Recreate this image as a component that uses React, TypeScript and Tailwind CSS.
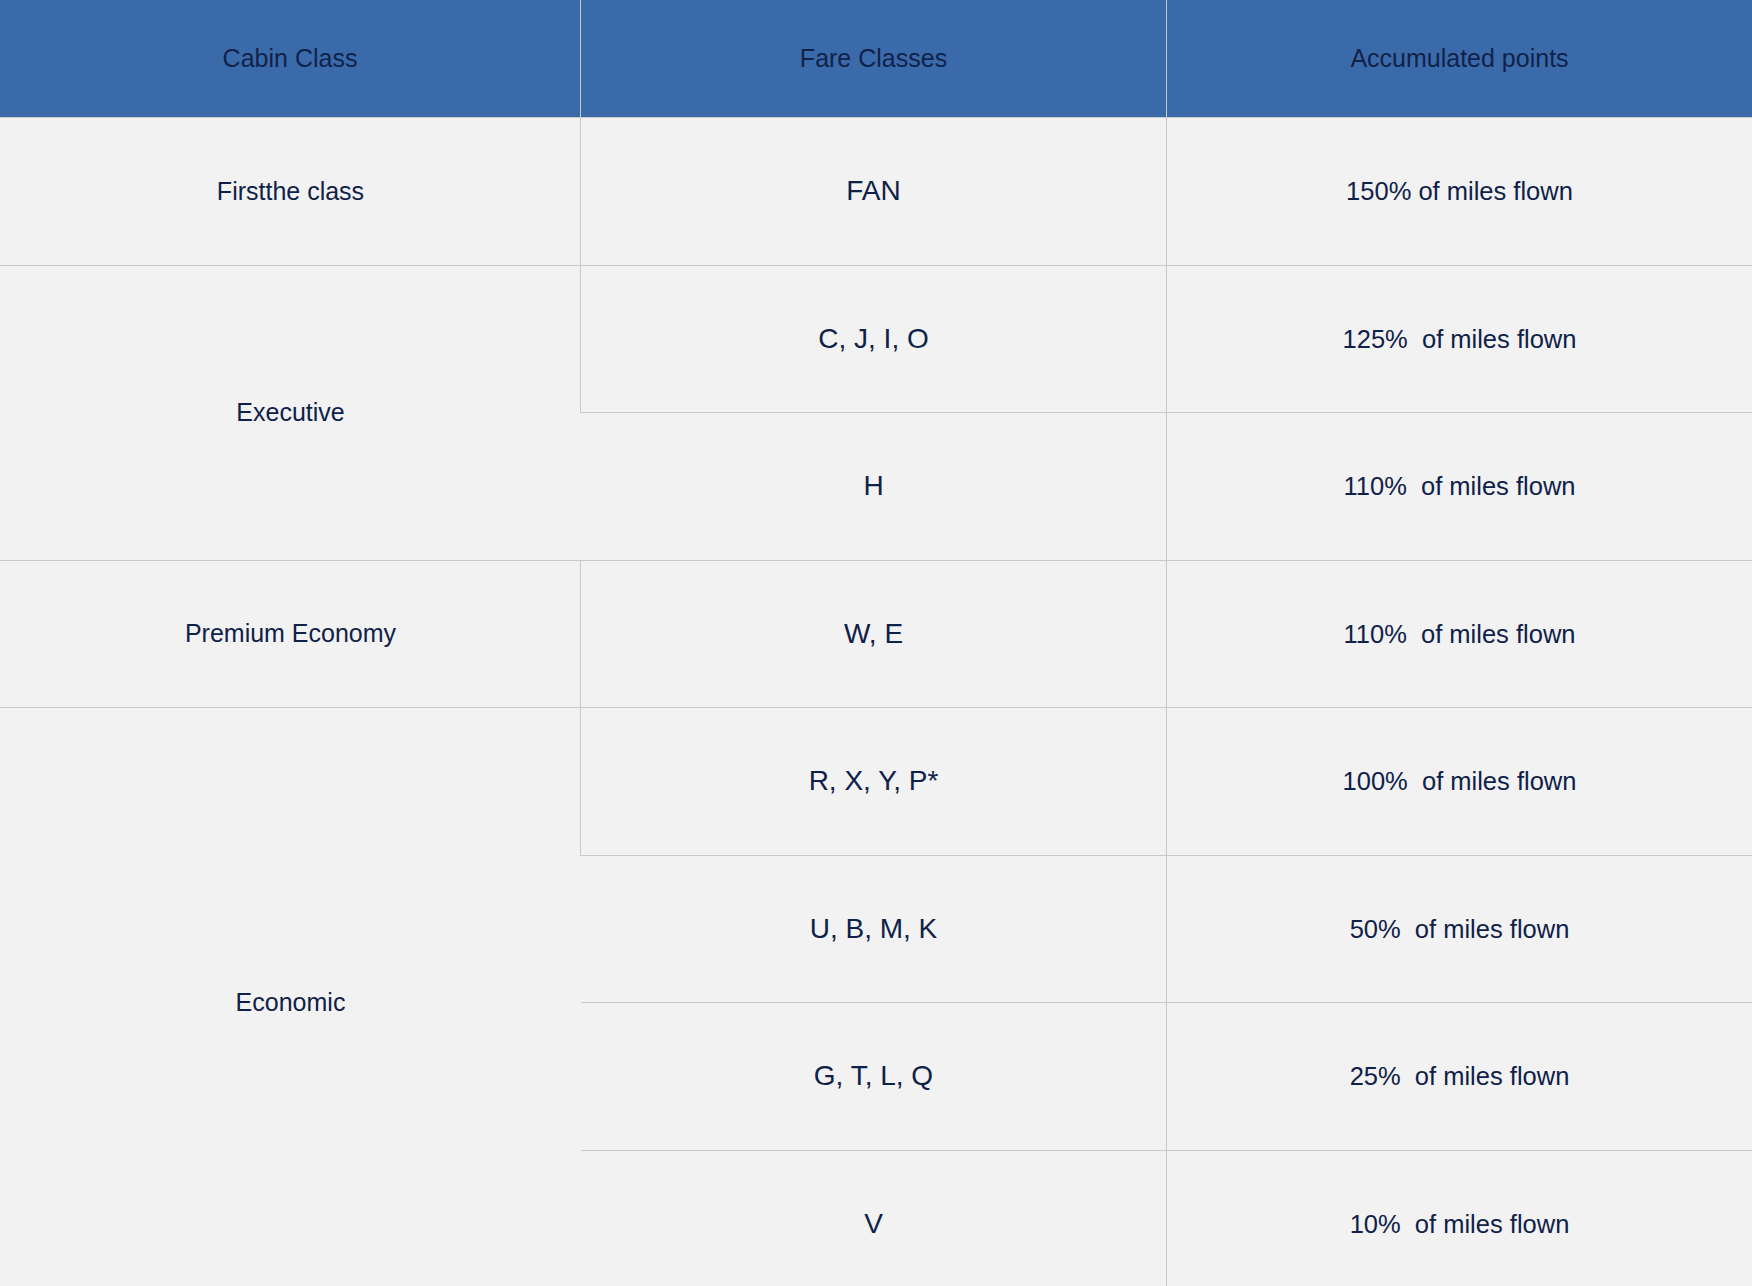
const HEADERS = ['Cabin Class', 'Fare Classes', 'Accumulated points']

type Fare = { codes: string; points: string }
type Group = { cabin: string; fares: Fare[] }

const GROUPS: Group[] = [
  { cabin: 'Firstthe class', fares: [{ codes: 'FAN', points: '150% of miles flown' }] },
  {
    cabin: 'Executive',
    fares: [
      { codes: 'C, J, I, O', points: '125%  of miles flown' },
      { codes: 'H', points: '110%  of miles flown' },
    ],
  },
  { cabin: 'Premium Economy', fares: [{ codes: 'W, E', points: '110%  of miles flown' }] },
  {
    cabin: 'Economic',
    fares: [
      { codes: 'R, X, Y, P*', points: '100%  of miles flown' },
      { codes: 'U, B, M, K', points: '50%  of miles flown' },
      { codes: 'G, T, L, Q', points: '25%  of miles flown' },
      { codes: 'V', points: '10%  of miles flown' },
    ],
  },
]

const ROW_SPAN = ['row-span-1', 'row-span-2', 'row-span-3', 'row-span-4']

export default function App() {
  return (
    <div
      className="min-h-screen bg-[#f2f2f2] text-[#0f2148]"
      style={{ fontFamily: '"Liberation Sans", Arial, sans-serif' }}
    >
      <div className="grid grid-cols-[581px_586px_1fr] grid-rows-[118px_repeat(8,147.5px)]">
        {/* Header */}
        {HEADERS.map((h, i) => (
          <div
            key={h}
            className={`flex items-center justify-center bg-[#3b6aab] border-b border-[#c9c9c9] text-[25px] text-[#112249] ${
              i < 2 ? 'border-r' : ''
            }`}
          >
            {h}
          </div>
        ))}

        {/* Body */}
        {GROUPS.map(group => (
          <div key={group.cabin} className="contents">
            <div
              className={`${ROW_SPAN[group.fares.length - 1]} col-start-1 flex items-center justify-center border-b border-[#c9c9c9] text-[25px]`}
            >
              {group.cabin}
            </div>
            {group.fares.map((fare, j) => (
              <div key={fare.codes} className="contents">
                <div
                  className={`col-start-2 flex items-center justify-center border-b border-r border-[#c9c9c9] text-[28px] ${
                    j === 0 ? 'border-l -ml-px' : ''
                  }`}
                >
                  {fare.codes}
                </div>
                <div className="col-start-3 flex items-center justify-center border-b border-[#c9c9c9] text-[25.5px] whitespace-pre">
                  {fare.points}
                </div>
              </div>
            ))}
          </div>
        ))}
      </div>
    </div>
  )
}
